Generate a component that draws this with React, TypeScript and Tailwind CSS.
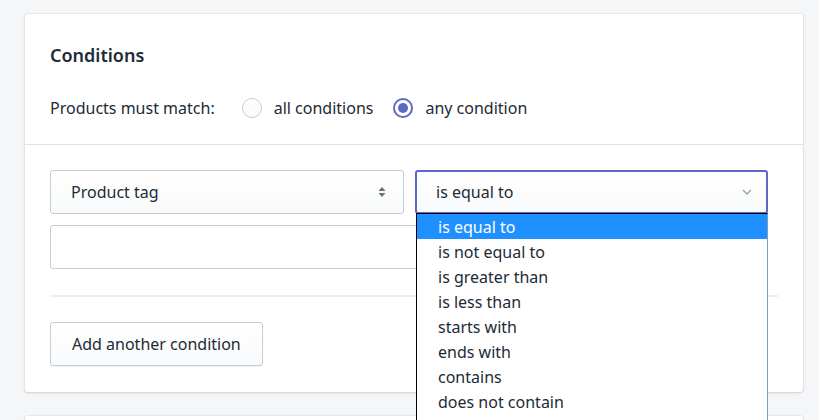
import { useState } from "react";

const font = { fontFamily: '"Segoe UI", "Noto Sans", sans-serif' };

const options = [
  "is equal to",
  "is not equal to",
  "is greater than",
  "is less than",
  "starts with",
  "ends with",
  "contains",
  "does not contain",
];

const Radio = ({ checked, label }: { checked: boolean; label: string }) => (
  <label className="flex items-center gap-[12px]">
    <span
      className={
        checked
          ? "flex h-[20px] w-[20px] items-center justify-center rounded-full border-2 border-[#5c6ac4] bg-white"
          : "h-[20px] w-[20px] rounded-full border border-[#c4cdd5] bg-gradient-to-b from-white to-[#f9fafb]"
      }
    >
      {checked && <span className="h-[10px] w-[10px] rounded-full bg-[#5c6ac4]" />}
    </span>
    <span>{label}</span>
  </label>
);

const UpDown = () => (
  <svg width="8" height="12" viewBox="0 0 8 12" className="text-[#637381]">
    <path d="M4 1 L7.5 5 H0.5 Z M4 11 L0.5 7 H7.5 Z" fill="currentColor" />
  </svg>
);

const Chevron = () => (
  <svg width="10" height="6" viewBox="0 0 10 6" className="text-[#919eab]">
    <path d="M1 1 L5 5 L9 1" fill="none" stroke="currentColor" strokeWidth="1.3" />
  </svg>
);

export default function App() {
  const [active] = useState(0);

  return (
    <div
      className="h-[420px] w-[819px] overflow-hidden bg-[#f4f6f8] text-[16px] text-[#212b36]"
      style={font}
    >
      <div className="ml-[25px] mt-[14px] w-[778px] rounded-[3px] bg-white shadow-[0_0_0_1px_rgba(63,63,68,0.05),0_1px_3px_0_rgba(63,63,68,0.15)]">
        <div className="border-b border-[#dfe3e8] px-[25px] pb-[24px] pt-[29px]">
          <h2 className="text-[18px] font-semibold leading-[24px]">Conditions</h2>
          <div className="mt-[29px] flex items-center leading-[24px]">
            <span className="mr-[27px]">Products must match:</span>
            <div className="flex items-center gap-[20px]">
              <Radio checked={false} label="all conditions" />
              <Radio checked label="any condition" />
            </div>
          </div>
        </div>

        <div className="px-[25px] pb-[26px] pt-[25px]">
          <div className="w-[718px]">
            <div className="flex gap-[11px]">
              <div className="flex h-[44px] w-[354px] items-center justify-between rounded-[3px] border border-[#c4cdd5] bg-gradient-to-b from-white to-[#f9fafb] pl-[20px] pr-[17px]">
                <span>Product tag</span>
                <UpDown />
              </div>
              <div className="relative w-[353px]">
                <div className="flex h-[44px] items-center justify-between rounded-[3px] border-2 border-[#5c6ac4] bg-gradient-to-b from-white to-[#f9fafb] pl-[19px] pr-[14px]">
                  <span>is equal to</span>
                  <Chevron />
                </div>
                <ul className="absolute left-[1px] top-[43px] z-10 w-[352px] border-l border-t border-r border-l-black border-t-black border-r-[#7f9db9] bg-white pb-[12px]">
                  {options.map((o, i) => (
                    <li
                      key={o}
                      className={
                        i === active
                          ? "h-[25px] bg-[#1e90ff] pl-[21px] leading-[26px] text-white"
                          : "h-[25px] pl-[21px] leading-[26px] text-[#212b36]"
                      }
                    >
                      {o}
                    </li>
                  ))}
                </ul>
              </div>
            </div>
            <div className="mt-[11px] h-[44px] rounded-[3px] border border-[#c4cdd5] bg-white" />
          </div>
          <div className="mt-[26px] h-[2px] w-[728px] bg-[#eceef1]" />
          <button className="mt-[25px] h-[44px] rounded-[3px] border border-[#c4cdd5] bg-gradient-to-b from-white to-[#f9fafb] px-[21px] shadow-[0_1px_0_0_rgba(22,29,37,0.05)]">
            Add another condition
          </button>
        </div>
      </div>
      <div className="ml-[25px] mt-[24px] h-[40px] w-[778px] rounded-[3px] bg-white shadow-[0_0_0_1px_rgba(63,63,68,0.05),0_1px_3px_0_rgba(63,63,68,0.15)]" />
    </div>
  );
}
